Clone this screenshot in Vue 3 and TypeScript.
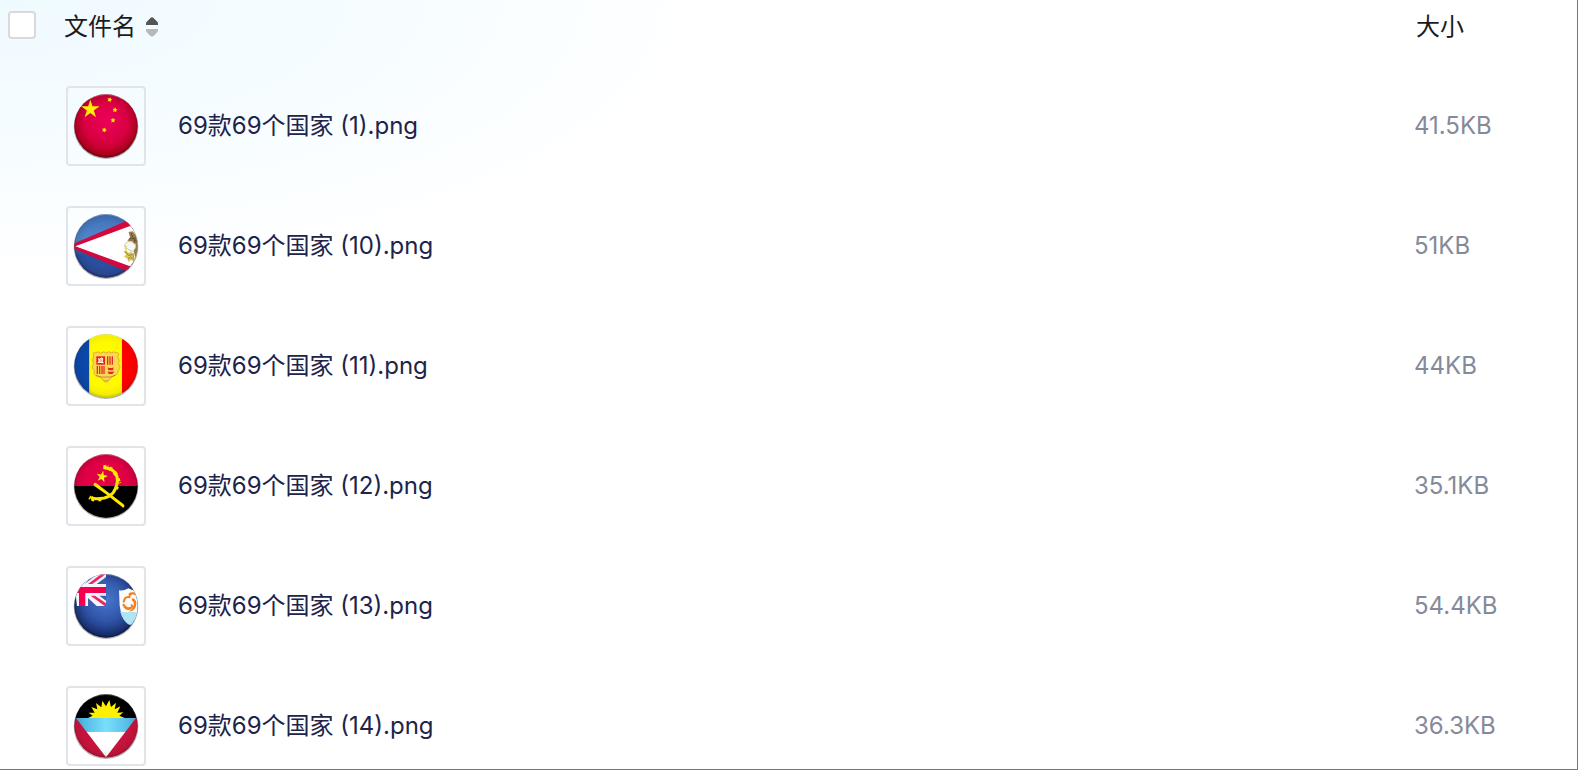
<script setup lang="ts">
import { computed, ref } from 'vue'

type Flag = 'china' | 'samoa' | 'andorra' | 'angola' | 'anguilla' | 'antigua'

interface FileRow {
  index: number
  flag: Flag
  size: string
}

const files: FileRow[] = [
  { index: 1, flag: 'china', size: '41.5KB' },
  { index: 10, flag: 'samoa', size: '51KB' },
  { index: 11, flag: 'andorra', size: '44KB' },
  { index: 12, flag: 'angola', size: '35.1KB' },
  { index: 13, flag: 'anguilla', size: '54.4KB' },
  { index: 14, flag: 'antigua', size: '36.3KB' },
]

const ascending = ref(true)
const allSelected = ref(false)
const rows = computed(() => (ascending.value ? files : [...files].reverse()))

// Points of a five-pointed star, first ray turned by `turn` degrees from the top
function star(cx: number, cy: number, outer: number, inner: number, turn = 0): string {
  const points: string[] = []
  for (let i = 0; i < 10; i++) {
    const r = i % 2 === 0 ? outer : inner
    const a = (i * 36 - 90 + turn) * (Math.PI / 180)
    points.push(`${(cx + r * Math.cos(a)).toFixed(1)},${(cy + r * Math.sin(a)).toFixed(1)}`)
  }
  return points.join(' ')
}
</script>

<template>
  <main class="panel">
    <svg class="defs" aria-hidden="true">
      <defs>
        <clipPath id="disc"><circle cx="138" cy="138" r="95" /></clipPath>
        <radialGradient id="shade" cx="0.5" cy="0.48" r="0.52">
          <stop offset="0.65" stop-color="#000" stop-opacity="0" />
          <stop offset="0.88" stop-color="#000" stop-opacity="0.1" />
          <stop offset="1" stop-color="#000" stop-opacity="0.55" />
        </radialGradient>
        <radialGradient id="red" cx="0.5" cy="0.42" r="0.6">
          <stop offset="0" stop-color="#ee005a" />
          <stop offset="0.55" stop-color="#d80042" />
          <stop offset="1" stop-color="#b00010" />
        </radialGradient>
        <radialGradient id="navy" cx="0.5" cy="0.4" r="0.6">
          <stop offset="0" stop-color="#4878cc" />
          <stop offset="0.55" stop-color="#3054a8" />
          <stop offset="1" stop-color="#142868" />
        </radialGradient>
        <linearGradient id="blue" x1="0" y1="0" x2="0" y2="1">
          <stop offset="0" stop-color="#4070b8" />
          <stop offset="0.4" stop-color="#5088cc" />
          <stop offset="0.65" stop-color="#2850a0" />
          <stop offset="1" stop-color="#304c9c" />
        </linearGradient>
        <linearGradient id="sky" x1="0" y1="0" x2="1" y2="0">
          <stop offset="0" stop-color="#40a8d8" />
          <stop offset="0.5" stop-color="#78e0fc" />
          <stop offset="1" stop-color="#48acdc" />
        </linearGradient>
      </defs>
    </svg>

    <table class="files">
      <colgroup>
        <col class="col-check" />
        <col />
        <col class="col-size" />
      </colgroup>
      <thead>
        <tr>
          <th class="check"><input v-model="allSelected" type="checkbox" aria-label="全选" /></th>
          <th>
            <button class="sort" type="button" @click="ascending = !ascending">
              文件名
              <svg class="arrows" viewBox="0 0 12 20" aria-hidden="true">
                <path d="M0 8V6.5Q0 5.5 1 4.5L4 1.4Q6 -.8 8 1.4L11 4.5Q12 5.5 12 6.5V8Z" :fill="ascending ? '#555' : '#b8b8b8'" />
                <path d="M0 12V13.5Q0 14.5 1 15.5L4 18.6Q6 20.8 8 18.6L11 15.5Q12 14.5 12 13.5V12Z" :fill="ascending ? '#b8b8b8' : '#555'" />
              </svg>
            </button>
          </th>
          <th class="size-head">大小</th>
        </tr>
      </thead>
      <tbody>
        <tr v-for="file in rows" :key="file.index">
          <td></td>
          <td>
            <div class="file">
              <span class="thumb">
                <svg viewBox="24 24 228 228" aria-hidden="true">
                  <circle cx="138" cy="140" r="97" fill="#000" opacity="0.3" />
                  <g clip-path="url(#disc)">
                    <template v-if="file.flag === 'china'">
                      <rect x="40" y="40" width="196" height="196" fill="url(#red)" />
                      <rect x="40" y="40" width="196" height="196" fill="url(#shade)" />
                    </template>

                    <template v-else-if="file.flag === 'samoa'">
                      <rect x="40" y="40" width="196" height="196" fill="url(#blue)" />
                      <rect x="40" y="40" width="196" height="196" fill="url(#shade)" />
                      <path d="M30 136L220 54V222L30 142Z" fill="#d4083c" />
                      <path d="M46 139L208 79H240V198H208Z" fill="#fff" />
                      <path d="M206 96L218 94L232 112L236 150L226 178L224 152L228 134L216 124L202 122L210 112Z" fill="#987848" />
                      <path d="M214 100L218 112L230 126M208 116L220 116M226 112L222 130" fill="none" stroke="#605030" stroke-width="3" />
                      <path d="M194 134L204 124L218 126L228 138L222 154L210 152L202 146L196 148Z" fill="#f6f6f2" stroke="#a8a8a0" stroke-width="2" />
                      <path d="M193 136L201 138L198 148Z" fill="#f0e020" />
                      <path d="M190 154L200 151L204 158L214 156L222 162L218 168L226 174L222 184L213 180L206 186L201 175L192 170L199 163Z" fill="#dcc450" />
                      <path d="M195 156L206 166L218 164M204 177L212 171L222 181M225 147L220 173" fill="none" stroke="#908040" stroke-width="3" />
                    </template>

                    <template v-else-if="file.flag === 'andorra'">
                      <rect x="40" y="40" width="48" height="196" fill="#0c48a8" />
                      <rect x="88" y="40" width="98" height="196" fill="#fffa00" />
                      <rect x="186" y="40" width="50" height="196" fill="#ff0000" />
                      <rect x="40" y="40" width="196" height="196" fill="url(#shade)" opacity="0.5" />
                      <path d="M101 109Q96 95 107 98Q115 92 122 100Q132 92 138 99Q147 91 153 99Q162 93 169 98Q180 96 173 111Q181 121 175 131Q185 142 175 151Q173 166 161 168Q151 171 147 181Q138 192 128 180Q124 170 113 170Q99 165 103 152Q92 143 101 131Q95 121 101 109Z" fill="#fcd850" stroke="#dcb030" stroke-width="3" />
                      <rect x="109" y="109" width="26" height="25" fill="#e82020" />
                      <path d="M114 114L120 116L124 112L130 116L128 124L132 130L120 128L112 130L116 123Z" fill="#fff" />
                      <rect x="119" y="116" width="8" height="10" fill="#f0c850" />
                      <path d="M143 109V134M150 109V134M157 109V134M112 138V162M119 138V162M126 138V162M132 138V162" stroke="#e03028" stroke-width="4" />
                      <path d="M143 142L147 144H157L160 141V149L156 151H145ZM143 154L147 155H157L161 153V159L156 162H146Z" fill="#e02820" />
                      <path d="M108 166Q125 174 138 171Q153 174 167 165" fill="none" stroke="#9c702c" stroke-width="2" />
                      <path d="M127 176Q138 184 149 176L143 186H133Z" fill="#e8b040" />
                    </template>

                    <template v-else-if="file.flag === 'angola'">
                      <rect x="40" y="40" width="196" height="98" fill="#e00044" />
                      <rect x="40" y="40" width="196" height="196" fill="url(#shade)" />
                      <rect x="40" y="138" width="196" height="98" fill="#000" />
                      <polygon :points="star(126, 110, 18, 7, 12)" fill="#ffee00" />
                      <path d="M133 83Q174 87 172 125Q167 166 133 174Q101 180 93 171" fill="none" stroke="#ffe800" stroke-width="9" />
                      <path d="M130 81L145 82M148 85L160 90M163 97L171 107M173 116L178 130M171 139L168 148M124 178L114 178M103 180L88 172" fill="none" stroke="#ffe800" stroke-width="12" stroke-dasharray="9 4" />
                      <path d="M101 132Q104 125 112 132L190 192Q196 196 192 202Q188 204 183 198L137 162L103 138Q99 135 101 132Z" fill="#ffe800" />
                    </template>

                    <template v-else-if="file.flag === 'anguilla'">
                      <rect x="40" y="40" width="196" height="196" fill="url(#navy)" />
                      <rect x="40" y="40" width="196" height="196" fill="url(#shade)" />
                      <path d="M177 91Q190 94 205 85Q219 94 240 91V160Q221 188 207 190Q183 176 179 137Z" fill="#fcfcfc" />
                      <path d="M181 156H238V194H207Q189 184 181 156Z" fill="#b0e4f4" />
                      <g fill="#f08020">
                        <path d="M188 127Q190 107 207 108Q201 96 221 97Q228 99 226 105Q217 101 211 107Q214 112 209 115Q198 111 195 124Q193 130 188 127Z" />
                        <path d="M187 132Q193 129 197 137Q205 146 214 139L211 133Q220 132 220 139Q214 153 200 149Q189 144 187 132Z" />
                        <path d="M217 114Q229 117 229 132Q228 153 207 155Q218 148 221 136Q223 124 215 121Z" />
                      </g>
                      <!-- Union canton -->
                      <path d="M40 40H138V138H51Z" fill="#f8f4fa" />
                      <path d="M138 51V72H110ZM74 72L96 48L108 46ZM118 107H138V122ZM84 114L110 138H84Z" fill="#3c5cac" />
                      <path d="M138 42L97 72H84L126 40ZM92 107H105L138 130V138H134Z" fill="#ec2864" />
                      <path d="M40 81H138V99H76V138H57V99H40Z" fill="#f40050" />
                    </template>

                    <template v-else>
                      <rect x="40" y="40" width="196" height="74" fill="#000" />
                      <rect x="40" y="114" width="196" height="42" fill="url(#sky)" />
                      <rect x="40" y="156" width="196" height="80" fill="#fff" />
                      <path d="M84 114L98 107L86 98L104 98L94 81L112 88L108 69L124 82L127 62L138 79L148 60L153 81L168 68L164 88L181 79L172 98L190 97L178 107L194 114Z" fill="#fff000" />
                      <path d="M48 114L138 232L228 114H240V240H36V114Z" fill="#c8143c" />
                      <rect x="40" y="40" width="196" height="196" fill="url(#shade)" opacity="0.6" />
                    </template>
                    <path d="M70 69Q138 18 206 69" fill="none" stroke="#fff" stroke-width="3" opacity="0.3" />
                  </g>
                  <g v-if="file.flag === 'china'" fill="#ffee00">
                    <polygon :points="star(91, 88, 29, 11)" />
                    <polygon :points="star(149, 59, 8, 4, 20)" />
                    <polygon :points="star(165, 90, 8, 4, 8)" />
                    <polygon :points="star(159, 121, 8, 4)" />
                    <polygon :points="star(133, 150, 8, 4, 20)" />
                  </g>
                </svg>
              </span>
              <span class="name">69款69个国家 ({{ file.index }}).png</span>
            </div>
          </td>
          <td class="size">{{ file.size }}</td>
        </tr>
      </tbody>
    </table>
  </main>
</template>

<style>
body {
  margin: 0;
}
</style>

<style scoped>
.panel {
  box-sizing: border-box;
  height: 100vh;
  overflow: hidden;
  border-right: 1px solid #777;
  border-bottom: 1px solid #777;
  background: radial-gradient(ellipse 720px 280px at 0 0, #effaff 0%, #f4fcff 40%, #fff 100%) #fff;
  font-family: Inter, "Noto Sans CJK SC", sans-serif;
  font-size: 24px;
  line-height: 32px;
}

.defs {
  position: absolute;
  width: 0;
  height: 0;
}

.files {
  width: 100%;
  table-layout: fixed;
  border-collapse: collapse;
}

.col-check {
  width: 64px;
}

.col-size {
  width: 163px;
}

th,
td {
  padding: 0;
  text-align: left;
  vertical-align: middle;
}

th {
  box-sizing: border-box;
  height: 66px;
  padding: 2px 0 14px;
  color: #1c1c20;
  font-weight: 400;
}

th.check {
  padding: 0 0 16px 8px;
}

.check input {
  display: block;
  box-sizing: border-box;
  width: 28px;
  height: 28px;
  margin: 0;
  appearance: none;
  border: 2px solid #d9d9d9;
  border-radius: 4px;
  background: #fff;
}

.check input:checked {
  background: #5080f0;
}

.sort {
  display: flex;
  align-items: center;
  gap: 10px;
  padding: 0;
  border: 0;
  background: none;
  color: inherit;
  font: inherit;
  cursor: pointer;
}

.arrows {
  width: 12px;
  height: 20px;
}

th.size-head {
  padding-left: 2px;
}

td {
  height: 120px;
}

.file {
  display: flex;
  align-items: center;
  gap: 32px;
  padding-left: 2px;
}

.thumb {
  box-sizing: border-box;
  flex: none;
  width: 80px;
  height: 80px;
  border: 2px solid #e1e4e9;
  border-radius: 4px;
}

.thumb svg {
  display: block;
  width: 100%;
  height: 100%;
}

.name {
  color: #20244a;
}

.size {
  color: #858a9a;
}
</style>
